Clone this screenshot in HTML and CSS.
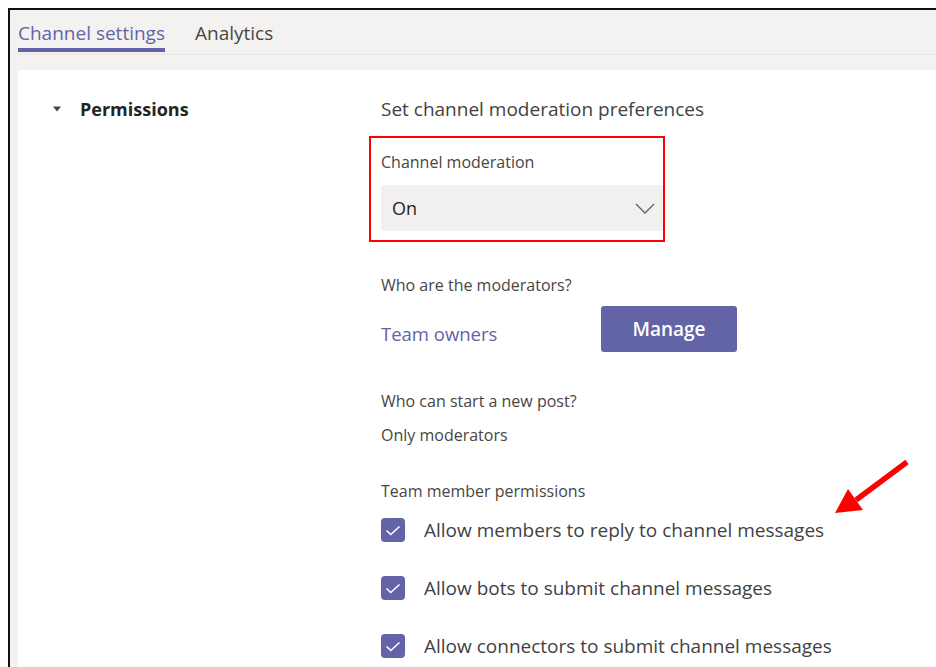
FILE: index.html
```html
<!DOCTYPE html>
<html lang="en">
<head>
<meta charset="utf-8">
<title>Channel settings</title>
<link rel="stylesheet" href="styles.css">
</head>
<body>
<div class="frame">
  <nav class="tabs">
    <span class="tab tab-active">Channel settings</span>
    <span class="tab">Analytics</span>
  </nav>
  <div class="tabs-rule"></div>
  <section class="card">
    <div class="section-head">
      <svg class="caret" width="10" height="6" viewBox="0 0 10 6"><path d="M1 0.5 L9 0.5 L5 5.5 Z" fill="#424242"/></svg>
      <h2 class="section-title">Permissions</h2>
    </div>
    <div class="section-body">
      <p class="intro">Set channel moderation preferences</p>

      <div class="highlight">
        <label class="field-label">Channel moderation</label>
        <div class="select">
          <span class="select-value">On</span>
          <svg class="chevron" width="20" height="11" viewBox="0 0 20 11"><path d="M1 1 L10 10 L19 1" fill="none" stroke="#616161" stroke-width="1.3"/></svg>
        </div>
      </div>

      <p class="field-label gap-top">Who are the moderators?</p>
      <div class="moderators">
        <span class="link">Team owners</span>
        <button class="btn-primary">Manage</button>
      </div>

      <p class="field-label gap-top2">Who can start a new post?</p>
      <p class="field-value">Only moderators</p>

      <p class="field-label gap-top3">Team member permissions</p>
      <ul class="checks">
        <li class="check-row"><span class="checkbox"><svg width="16" height="11" viewBox="0 0 16 11"><path d="M1.5 5.5 L5.8 9.5 L14.5 1.5" fill="none" stroke="#fff" stroke-width="1.6"/></svg></span>Allow members to reply to channel messages</li>
        <li class="check-row"><span class="checkbox"><svg width="16" height="11" viewBox="0 0 16 11"><path d="M1.5 5.5 L5.8 9.5 L14.5 1.5" fill="none" stroke="#fff" stroke-width="1.6"/></svg></span>Allow bots to submit channel messages</li>
        <li class="check-row"><span class="checkbox"><svg width="16" height="11" viewBox="0 0 16 11"><path d="M1.5 5.5 L5.8 9.5 L14.5 1.5" fill="none" stroke="#fff" stroke-width="1.6"/></svg></span>Allow connectors to submit channel messages</li>
      </ul>
    </div>
  </section>
  <svg class="callout-arrow" width="86" height="66" viewBox="0 0 86 66">
    <path d="M81 11 L30 49" stroke="#ff0000" stroke-width="5.5" fill="none"/>
    <path d="M9 62 L22 38 L37 59 Z" fill="#ff0000"/>
  </svg>
</div>
</body>
</html>
```

FILE: styles.css
```css
* { box-sizing: border-box; }

html, body { height: 100%; }

body {
  margin: 0;
  padding: 8px 0 0 8px;
  background: #fff;
  font-family: "Open Sans", "Noto Sans", sans-serif;
  color: #424242;
  overflow: hidden;
}

.frame {
  position: relative;
  height: 100%;
  background: #f3f2f1;
  border-top: 2px solid #111;
  border-left: 2px solid #111;
  overflow: hidden;
}

.tabs {
  display: flex;
  gap: 30px;
  padding: 9px 0 0 8px;
}

.tab {
  font-size: 19px;
  line-height: 28px;
  color: #484644;
  padding-bottom: 1px;
  border-bottom: 4px solid transparent;
}

.tab-active {
  color: #6264a7;
  border-bottom-color: #6264a7;
}

.tabs-rule {
  height: 1px;
  margin: 2px 0 0 8px;
  background: #e8e6e4;
}

.card {
  display: flex;
  margin: 15px 0 0 8px;
  width: 1000px;
  height: 700px;
  background: #fff;
  border-radius: 4px;
}

.section-head {
  display: flex;
  align-items: center;
  width: 363px;
  padding: 26px 0 0 34px;
  align-self: flex-start;
}

.caret { margin-right: 18px; }

.section-title {
  margin: 0;
  font-size: 18px;
  font-weight: 700;
  line-height: 26px;
  color: #242424;
}

.section-body {
  padding-top: 26px;
}

.intro {
  margin: 0;
  font-size: 19px;
  line-height: 26px;
  color: #424242;
}

.highlight {
  width: 296px;
  margin: 14px 0 0 -12px;
  padding: 13px 0 9px 10px;
  border: 2px solid #ff0000;
}

.field-label {
  display: block;
  margin: 0;
  font-size: 16px;
  line-height: 22px;
  color: #484644;
}

.select {
  display: flex;
  align-items: center;
  justify-content: space-between;
  height: 46px;
  margin-top: 12px;
  padding: 0 8px 0 11px;
  background: #f1f0ef;
  border-radius: 3px;
}

.select-value {
  font-size: 18px;
  color: #252423;
}

.gap-top { margin-top: 32px; }
.gap-top2 { margin-top: 38px; }
.gap-top3 { margin-top: 34px; }

.moderators {
  display: flex;
  align-items: center;
  margin-top: 10px;
}

.link {
  width: 220px;
  padding-top: 8px;
  font-size: 18.5px;
  color: #6264a7;
}

.btn-primary {
  width: 136px;
  height: 46px;
  border: none;
  border-radius: 3px;
  background: #6264a7;
  color: #fff;
  font-family: inherit;
  font-size: 19px;
  font-weight: 600;
}

.field-value {
  margin: 12px 0 0;
  font-size: 16px;
  line-height: 22px;
  color: #484644;
}

.checks {
  list-style: none;
  margin: 14px 0 0;
  padding: 0;
  display: flex;
  flex-direction: column;
  gap: 30px;
}

.check-row {
  display: flex;
  align-items: center;
  font-size: 19px;
  line-height: 28px;
  color: #424242;
}

.checkbox {
  display: flex;
  align-items: center;
  justify-content: center;
  width: 24px;
  height: 24px;
  margin-right: 19px;
  background: #6264a7;
  border-radius: 4px;
}

.callout-arrow {
  position: absolute;
  left: 816px;
  top: 441px;
}
```
